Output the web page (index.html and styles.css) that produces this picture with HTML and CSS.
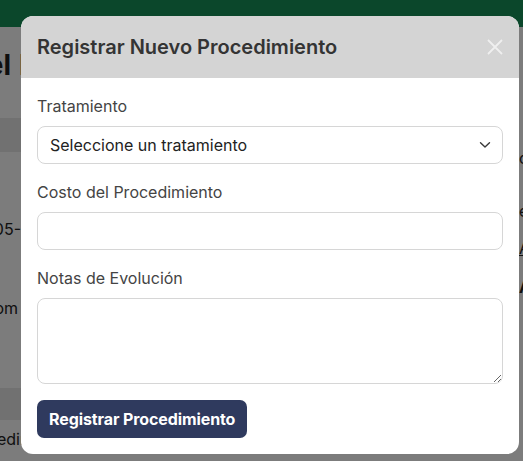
FILE: index.html
```html
<!DOCTYPE html>
<html lang="es">
<head>
<meta charset="utf-8">
<title>Registrar Nuevo Procedimiento</title>
<link rel="stylesheet" href="styles.css">
</head>
<body>
<header class="topbar"></header>
<main class="page">
  <section class="main-col">
    <h1 class="bg-line page-title"><span class="clip clip-title"><span>Detalle del</span></span><span class="rest rest-title">Paciente</span></h1>
    <div class="band"></div>
    <div class="rows">
      <p class="bg-line row-text row-1"><span class="clip clip-21"><span>Fecha: 2024-05-</span></span><span>12</span></p>
      <p class="bg-line row-text row-2"><span class="clip clip-18"><span>Consulta de control, se recom</span></span><span class="rest rest-row">ienda reposo</span></p>
    </div>
    <div class="band band-2"></div>
    <p class="bg-line row-text row-3"><span class="clip clip-20"><span>Procedi</span></span><span>mientos</span></p>
  </section>
  <aside class="side-col">
    <p class="side-line s1">d</p>
    <p class="side-line s2">e</p>
    <p class="side-line s3 side-link">A</p>
    <p class="side-line s4 side-bold">A</p>
  </aside>
</main>

<div class="overlay"></div>

<div class="modal" role="dialog" aria-labelledby="modal-title">
  <div class="modal-header">
    <h2 id="modal-title" class="modal-title">Registrar Nuevo Procedimiento</h2>
    <button class="close-btn" aria-label="Cerrar">
      <svg width="16" height="16" viewBox="0 0 16 16" aria-hidden="true"><path d="M1 1 L15 15 M15 1 L1 15" stroke="#efefef" stroke-width="1.8" fill="none"/></svg>
    </button>
  </div>
  <form class="modal-body">
    <label class="field-label" for="tratamiento">Tratamiento</label>
    <div class="select-wrap">
      <select id="tratamiento" class="field select">
        <option>Seleccione un tratamiento</option>
      </select>
      <svg class="chevron" width="12" height="8" viewBox="0 0 12 8" aria-hidden="true"><path d="M1.5 1.8 L6 6 L10.5 1.8" stroke="#3a3a3a" stroke-width="1.4" fill="none" stroke-linecap="round" stroke-linejoin="round"/></svg>
    </div>
    <label class="field-label" for="costo">Costo del Procedimiento</label>
    <input id="costo" class="field" type="text">
    <label class="field-label" for="notas">Notas de Evolución</label>
    <textarea id="notas" class="field textarea"></textarea>
    <div class="actions">
      <button type="button" class="submit-btn">Registrar Procedimiento</button>
    </div>
  </form>
</div>
</body>
</html>
```
FILE: styles.css
```css
* { box-sizing: border-box; }
html, body { margin: 0; padding: 0; }
body {
  width: 523px;
  height: 461px;
  overflow: hidden;
  background: #f8f8f8;
  font-family: Inter, "Noto Sans", sans-serif;
  color: #222;
}
.topbar {
  height: 27px;
  background: #178f57;
}
.page {
  display: flex;
}
.main-col {
  width: 519px;
  flex: none;
}
.bg-line {
  display: flex;
  white-space: nowrap;
  margin: 0;
}
.clip {
  flex: none;
  display: flex;
  justify-content: flex-end;
}
.clip-title { width: 11px; }
.clip-21 { width: 21px; }
.clip-18 { width: 18px; }
.clip-20 { width: 20px; }
.rest-title { margin-left: 8px; }
.rest-row { margin-left: 4px; }
.page-title {
  padding-top: 21px;
  height: 91px;
  font-size: 28px;
  font-weight: 700;
  color: #1e1e1e;
  line-height: 34px;
}
.band {
  height: 34px;
  background: #e2e2e2;
}
.rows {
  padding-top: 65px;
}
.row-text {
  font-size: 16px;
  line-height: 24px;
  color: #222;
}
.row-2 { margin-top: 55px; }
.band-2 {
  margin-top: 68px;
  height: 32px;
}
.row-3 { margin-top: 7px; }
.side-col {
  padding-top: 119px;
}
.side-line {
  margin: 0;
  font-size: 16px;
  line-height: 24px;
}
.s2 { margin-top: 29px; }
.s3 { margin-top: 13px; text-decoration: underline; }
.s4 { margin-top: 15px; font-weight: 700; }
.overlay {
  position: fixed;
  inset: 0;
  background: rgba(0, 0, 0, 0.5);
}
.modal {
  position: fixed;
  left: 21px;
  top: 16px;
  width: 498px;
  background: #fff;
  border-radius: 12px;
  overflow: hidden;
}
.modal-header {
  height: 62px;
  background: #d4d4d4;
  display: flex;
  align-items: center;
  justify-content: space-between;
  padding: 0 16px;
}
.modal-title {
  margin: 0;
  font-size: 20px;
  font-weight: 600;
  color: #343434;
  line-height: 28px;
}
.close-btn {
  border: 0;
  background: none;
  padding: 0;
  width: 16px;
  height: 16px;
  display: flex;
}
.modal-body {
  display: flex;
  flex-direction: column;
  padding: 16px;
}
.field-label {
  font-size: 16px;
  line-height: 24px;
  color: #444;
  margin-bottom: 8px;
}
.field {
  width: 100%;
  height: 38px;
  border: 1px solid #d6d6d6;
  border-radius: 8px;
  background: #fff;
  font-family: inherit;
  font-size: 16px;
  color: #222;
  padding: 0 12px;
  margin-bottom: 16px;
}
.select-wrap {
  position: relative;
}
.select {
  appearance: none;
  -webkit-appearance: none;
  display: block;
}
.chevron {
  position: absolute;
  right: 12px;
  top: 15px;
}
.textarea {
  height: 86px;
  resize: vertical;
  padding: 6px 12px;
  display: block;
}
.actions { display: flex; }
.submit-btn {
  height: 38px;
  padding: 0 12px;
  background: #2f3a5e;
  color: #fff;
  font-family: inherit;
  font-size: 16px;
  font-weight: 700;
  letter-spacing: -0.1px;
  border: 0;
  border-radius: 7px;
}
```
